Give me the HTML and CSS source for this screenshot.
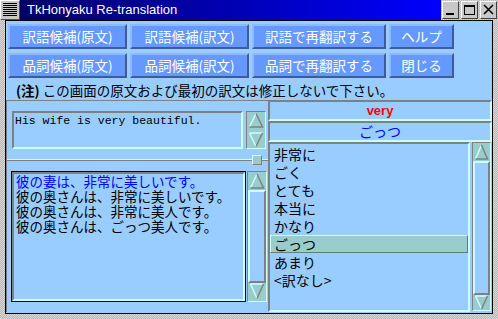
FILE: index.html
```html
<!DOCTYPE html>
<html lang="ja">
<head>
    <meta charset="UTF-8">
    <title>TkHonyaku Re-translation</title>
    <link rel="stylesheet" href="styles.css">
</head>
<body>
    <div class="window">
        <div class="titlebar">
            <div class="menu-icon"><span></span></div>
            <div class="title">TkHonyaku Re-translation</div>
            <div class="wm-buttons">
                <span class="wm-btn">
                    <svg width="15" height="16" viewBox="0 0 15 16"><rect x="3" y="11" width="8" height="2" fill="#000"/></svg>
                </span>
                <span class="wm-btn">
                    <svg width="15" height="16" viewBox="0 0 15 16"><rect x="2.5" y="3.5" width="10" height="9" fill="none" stroke="#000"/><rect x="2" y="3" width="11" height="2" fill="#000"/></svg>
                </span>
                <span class="wm-btn">
                    <svg width="15" height="16" viewBox="0 0 15 16"><path d="M3 3 L12 12 M12 3 L3 12" stroke="#000" stroke-width="1.6"/></svg>
                </span>
            </div>
        </div>

        <div class="client">
            <!-- ボタン -->
            <div class="toolbar">
                <button class="btn">訳語候補(原文)</button>
                <button class="btn">訳語候補(訳文)</button>
                <button class="btn">訳語で再翻訳する</button>
                <button class="btn">ヘルプ</button>
                <button class="btn">品詞候補(原文)</button>
                <button class="btn">品詞候補(訳文)</button>
                <button class="btn">品詞で再翻訳する</button>
                <button class="btn">閉じる</button>
            </div>

            <div class="note"><b>(注)</b> この画面の原文および最初の訳文は修正しないで下さい。</div>

            <div class="panes">
                <div class="left-pane">
                    <div class="upper">
                        <div class="src">His wife is very beautiful.</div>
                        <div class="scrollbar short">
                            <div class="arrow">
                                <svg width="16" height="16" viewBox="0 0 16 16"><path d="M1.5 15 L8 1.5" stroke="#ccffff" stroke-width="1.5"/><path d="M8 1.5 L14.5 15 L1.5 15" fill="none" stroke="#808080" stroke-width="1.5"/></svg>
                            </div>
                            <div class="arrow">
                                <svg width="16" height="16" viewBox="0 0 16 16"><path d="M1.5 1 L14.5 1 M1.5 1 L8 14.5" fill="none" stroke="#ccffff" stroke-width="1.5"/><path d="M14.5 1 L8 14.5" stroke="#808080" stroke-width="1.5"/></svg>
                            </div>
                        </div>
                    </div>

                    <div class="sash"><span class="handle"></span></div>

                    <div class="lower">
                        <div class="result">
                            <div class="result-inner">
                                <div class="first">彼の妻は、非常に美しいです。</div>
                                <div>彼の奥さんは、非常に美しいです。</div>
                                <div>彼の奥さんは、非常に美人です。</div>
                                <div>彼の奥さんは、ごっつ美人です。</div>
                            </div>
                        </div>
                        <div class="scrollbar">
                            <div class="arrow">
                                <svg width="16" height="17" viewBox="0 0 16 17"><path d="M1.5 16 L8 2" stroke="#ccffff" stroke-width="1.5"/><path d="M8 2 L14.5 16 L1.5 16" fill="none" stroke="#808080" stroke-width="1.5"/></svg>
                            </div>
                            <div class="thumb"></div>
                            <div class="arrow">
                                <svg width="16" height="17" viewBox="0 0 16 17"><path d="M1.5 1 L14.5 1 M1.5 1 L8 15.5" fill="none" stroke="#ccffff" stroke-width="1.5"/><path d="M14.5 1 L8 15.5" stroke="#808080" stroke-width="1.5"/></svg>
                            </div>
                        </div>
                    </div>
                </div>

                <div class="right-pane">
                    <div class="label word">very</div>
                    <div class="label pick">ごっつ</div>
                    <div class="listwrap">
                        <ul class="list">
                            <li>非常に</li>
                            <li>ごく</li>
                            <li>とても</li>
                            <li>本当に</li>
                            <li>かなり</li>
                            <li class="selected">ごっつ</li>
                            <li>あまり</li>
                            <li>&lt;訳なし&gt;</li>
                        </ul>
                        <div class="scrollbar">
                            <div class="arrow">
                                <svg width="15" height="17" viewBox="0 0 15 17"><path d="M1.5 16 L7.5 2" stroke="#ccffff" stroke-width="1.5"/><path d="M7.5 2 L13.5 16 L1.5 16" fill="none" stroke="#808080" stroke-width="1.5"/></svg>
                            </div>
                            <div class="thumb"></div>
                            <div class="arrow">
                                <svg width="15" height="15" viewBox="0 0 15 15"><path d="M1.5 1 L13.5 1 M1.5 1 L7.5 14" fill="none" stroke="#ccffff" stroke-width="1.5"/><path d="M13.5 1 L7.5 14" stroke="#808080" stroke-width="1.5"/></svg>
                            </div>
                        </div>
                    </div>
                </div>
            </div>
        </div>
    </div>
</body>
</html>
```

FILE: styles.css
```css
body {
    margin: 0;
    font-family: "Noto Sans CJK JP", sans-serif;
}
.window {
    width: 498px;
    height: 319px;
    background-color: #c6c6c6;
    background-image: repeating-conic-gradient(#b9b9b9 0 25%, #d6d6d6 0 50%);
    background-size: 2px 2px; /* ディザ風のグレー枠 */
}

/* タイトルバー */
.titlebar {
    height: 20px;
    display: flex;
}
.menu-icon {
    flex-shrink: 0;
    width: 20px;
    height: 20px;
    box-sizing: border-box;
    padding: 2px;
    border: 1px solid;
    border-color: #ffffff #505050 #505050 #ffffff;
    background: #c8c8c8;
}
.menu-icon span {
    display: block;
    height: 100%;
    background: repeating-linear-gradient(to bottom, #000 0 1px, #c8c8c8 1px 2px);
}
.title {
    flex: 1;
    min-width: 0;
    background: linear-gradient(to right, #000068, #0000ff);
    color: #ffffff;
    font-family: "Liberation Sans", Arial, sans-serif;
    font-size: 13px;
    line-height: 20px;
    padding-left: 7px;
    white-space: nowrap;
}
.wm-buttons {
    flex-shrink: 0;
    display: flex;
    gap: 2px;
    padding: 1px 1px 0 1px;
}
.wm-btn {
    width: 17px;
    height: 18px;
    box-sizing: border-box;
    border: 1px solid;
    border-color: #ffffff #404040 #404040 #ffffff;
    background: #c8c8c8;
    display: flex;
    align-items: center;
    justify-content: center;
}

/* 本体 */
.client {
    margin: 0 5px;
    height: 294px;
    box-sizing: border-box;
    border: 1px solid #000;
    background: #99ccff;
}
.toolbar {
    display: grid;
    grid-template-columns: 119px 119px 134px 65px;
    grid-auto-rows: 25px;
    column-gap: 3px;
    row-gap: 4px;
    padding: 3px 0 0 2px;
}
.btn {
    box-sizing: border-box;
    margin: 0;
    padding: 0;
    background: #6699ff;
    border: 2px solid;
    border-color: #8fb8ff #3d5c99 #3d5c99 #8fb8ff;
    color: #ffffff;
    font-family: "Noto Sans CJK JP", sans-serif;
    font-size: 13.5px;
    line-height: 1;
}
.note {
    height: 22px;
    box-sizing: border-box;
    padding: 2px 0 0 10px;
    line-height: 20px;
    font-size: 13.5px;
    color: #000;
}

.panes {
    display: flex;
    height: 212px;
}
.left-pane {
    width: 262px;
    display: flex;
    flex-direction: column;
}
.upper {
    height: 52px;
    box-sizing: border-box;
    border-top: 1px solid #808080;
    border-left: 1px solid #808080;
    padding: 10px 0 0 5px;
    display: flex;
    align-items: flex-start;
}
.src {
    width: 231px;
    height: 38px;
    box-sizing: border-box;
    border: 2px solid;
    border-color: #808080 #ccffff #ccffff #808080;
    padding: 1px 0 0 1px;
    font-family: "Liberation Mono", "Courier New", monospace;
    font-size: 11.5px;
    line-height: 14px;
}

/* スクロールバー */
.scrollbar {
    display: flex;
    flex-direction: column;
    box-sizing: border-box;
    border: 1px solid;
    border-color: #808080 #ccffff #ccffff #808080;
    background: #99ccff;
}
.scrollbar.short {
    margin-left: 3px;
    width: 20px;
    height: 38px;
    background: #99cccc;
    justify-content: space-between;
}
.arrow {
    background: #99cccc;
    display: flex;
    justify-content: center;
}
.thumb {
    flex: 1;
    border: 2px solid;
    border-color: #ccffff #808080 #808080 #ccffff;
}

.sash {
    height: 15px;
    position: relative;
    border-left: 1px solid #808080;
}
.sash::before {
    content: "";
    display: block;
    margin-top: 7px;
    border-top: 1px solid #ccffff;
    border-bottom: 1px solid #808080;
}
.handle {
    position: absolute;
    left: 245px;
    top: 3px;
    width: 10px;
    height: 10px;
    box-sizing: border-box;
    border: 1px solid;
    border-color: #ccffff #808080 #808080 #ccffff;
    background: #99cccc;
}
.lower {
    flex: 1;
    display: flex;
    align-items: flex-start;
    padding: 4px 0 0 4px;
    border-left: 1px solid #808080;
}
.result {
    width: 235px;
    height: 131px;
    box-sizing: border-box;
    border: 1px solid #000;
}
.result-inner {
    height: 100%;
    box-sizing: border-box;
    border: 2px solid;
    border-color: #808080 #ccffff #ccffff #808080;
    padding-left: 2px;
    font-size: 13.5px;
    line-height: 15px;
    white-space: nowrap;
}
.result-inner .first {
    color: #0000ff;
}
.lower .scrollbar {
    margin-left: 1px;
    width: 20px;
    height: 131px;
}
.lower .arrow {
    height: 18px;
}

/* 右側 */
.right-pane {
    flex: 1;
    display: flex;
    flex-direction: column;
}
.label {
    height: 21px;
    box-sizing: border-box;
    border: 2px solid;
    border-color: #808080 #ccffff #ccffff #808080;
    text-align: center;
    line-height: 17px;
}
.word {
    color: #ff0000;
    font-family: "Liberation Sans", Arial, sans-serif;
    font-weight: bold;
    font-size: 13px;
}
.pick {
    color: #0000ff;
    font-size: 14px;
}
.listwrap {
    flex: 1;
    display: flex;
}
.list {
    width: 202px;
    margin: 0;
    padding: 1px 0 0 0;
    list-style: none;
    box-sizing: border-box;
    border: 2px solid;
    border-color: #808080 #ccffff #ccffff #808080;
    font-size: 14px;
    line-height: 18px;
}
.list li {
    padding-left: 3px;
    border: 1px solid transparent;
    height: 16px;
    line-height: 16px;
}
.list li.selected {
    background: #99cccc;
    border-color: #ccffff #5f7f7f #5f7f7f #ccffff;
}
.listwrap .scrollbar {
    margin-left: 2px;
    width: 19px;
    height: 169px;
}
.listwrap .arrow {
    height: 18px;
}
.listwrap .arrow:last-child {
    height: 15px;
}
```
